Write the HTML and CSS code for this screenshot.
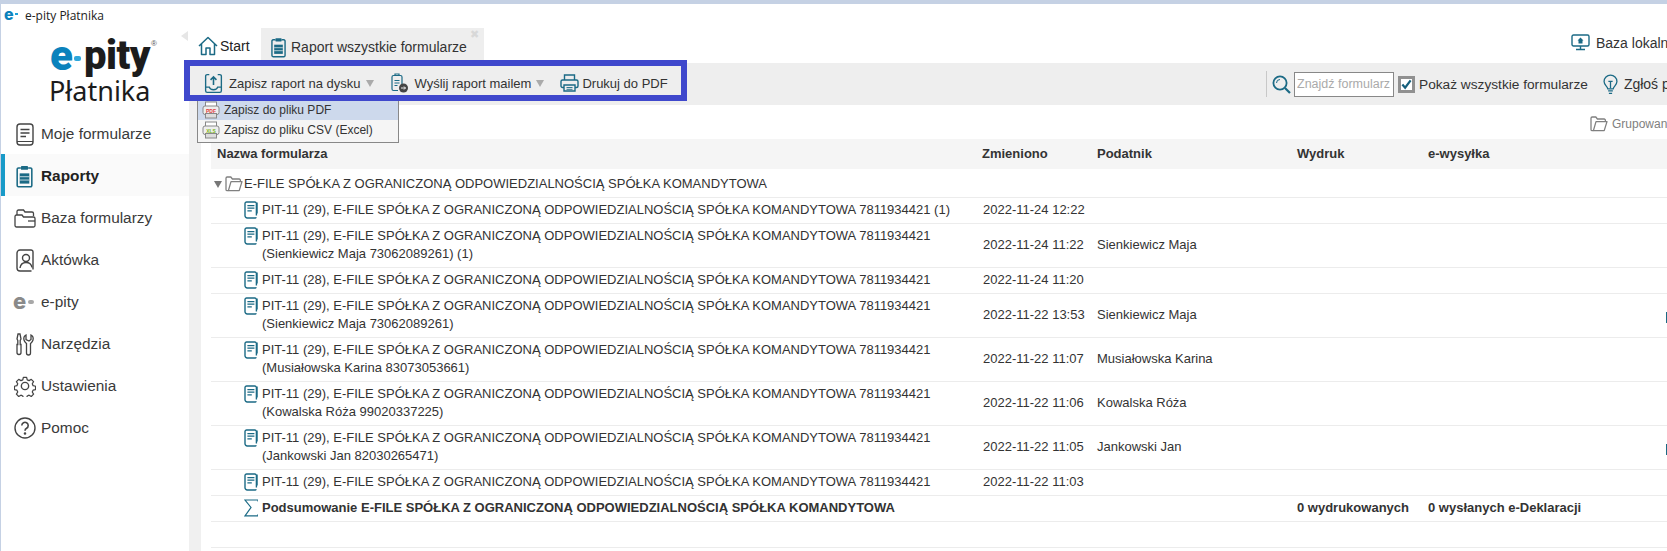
FILE: index.html
```html
<!DOCTYPE html>
<html lang="pl">
<head>
<meta charset="utf-8">
<title>e-pity Płatnika</title>
<link rel="stylesheet" href="styles.css">
</head>
<body>
<svg class="defs" width="0" height="0" aria-hidden="true">
  <symbol id="i-doc" viewBox="0 0 14 18">
    <path d="M12.4 14.6V2.6a1.6 1.6 0 0 0-1.6-1.6H2.6A1.6 1.6 0 0 0 1 2.6v12.2A2.2 2.2 0 0 0 3.2 17h8.2a1.4 1.4 0 0 0 1-.6" fill="none" stroke="currentColor" stroke-width="1.4"/>
    <path d="M3.4 4.6h7M3.4 7.2h7M3.4 9.8h4.4" fill="none" stroke="currentColor" stroke-width="1.2"/>
    <path d="M13.6 1.5v11" stroke="currentColor" stroke-width=".8"/>
  </symbol>
  <symbol id="i-clip" viewBox="0 0 16 22">
    <path d="M4.5 2.8H2.2A1.2 1.2 0 0 0 1 4v15.600a1.2 1.2 0 0 0 1.2 1.2h11.600a1.2 1.2 0 0 0 1.2-1.2V4a1.2 1.2 0 0 0-1.2-1.2h-2.300" fill="none" stroke="currentColor" stroke-width="1.5"/>
    <rect x="4.6" y="1" width="6.8" height="3.6" rx=".8" fill="currentColor"/>
    <rect x="3.4" y="8" width="9.2" height="9.8" fill="currentColor"/>
    <path d="M3.4 11.2h9.2M3.4 14.4h9.2" stroke="#fff" stroke-width=".7"/>
  </symbol>
  <symbol id="i-folder" viewBox="0 0 18 16">
    <path d="M3.400 14.600H2.200A1.200 1.200 0 0 1 1 13.400V2.200A1.200 1.200 0 0 1 2.200 1h3.600l1.600 2h6.800a1.200 1.200 0 0 1 1.200 1.200V5.600" fill="none" stroke="currentColor" stroke-width="1.300"/>
    <path d="M3.400 14.600 6 5.600h11l-2.800 9z" fill="none" stroke="currentColor" stroke-width="1.300" stroke-linejoin="round"/>
  </symbol>
</svg>

<div class="top-band"></div>
<header class="titlebar">
  <span class="title-logo">e<i class="title-dash"></i></span>
  <span class="title-text">e-pity Płatnika</span>
</header>

<div class="app">
  <aside class="sidebar">
    <svg class="collapse" width="7" height="10" viewBox="0 0 7 10"><path d="M7 0v10L0 5z" fill="#e6e6e6"/></svg>
    <div class="logo">
      <div class="logo-mark"><span class="logo-e">e</span><i class="logo-dash"></i><span class="logo-pity">pity</span><sup class="logo-reg">®</sup></div>
      <div class="logo-name">Płatnika</div>
    </div>
    <nav class="nav">
      <a class="nav-item">
        <span class="nav-icon"><svg width="18" height="23" viewBox="0 0 18 23" fill="none" stroke="#444" stroke-width="1.4"><rect x="1" y="1" width="16" height="21" rx="3"/><path d="M4.500 6.500h9M4.500 10h9M4.500 13.500h5.500"/><path d="M1 18.500h16" stroke-width="1"/></svg></span>
        Moje formularze
      </a>
      <a class="nav-item active">
        <span class="nav-icon teal"><svg width="17" height="23"><use href="#i-clip"/></svg></span>
        Raporty
      </a>
      <a class="nav-item">
        <span class="nav-icon"><svg width="22" height="22" viewBox="0 0 22 22" fill="none" stroke="#444" stroke-width="1.3"><path d="M3 8V4.500a1.500 1.500 0 0 1 1.500-1.500h5l1.500 2h7a1.500 1.500 0 0 1 1.500 1.500V9"/><path d="M1 9.500a1.500 1.500 0 0 1 1.500-1.500H8l1.500 2h10a1.500 1.500 0 0 1 1.500 1.500v7a1.500 1.500 0 0 1-1.500 1.500h-17A1.500 1.500 0 0 1 1 18.500z"/><path d="M14 14h7"/></svg></span>
        Baza formularzy
      </a>
      <a class="nav-item">
        <span class="nav-icon"><svg width="18" height="23" viewBox="0 0 18 23" fill="none" stroke="#444" stroke-width="1.4"><path d="M17 20.500V3a2 2 0 0 0-2-2H4a3 3 0 0 0-3 3v15a3 3 0 0 0 3 3h11.500"/><circle cx="10" cy="9" r="3.500"/><path d="M4 19c.5-3.500 3-5.500 6-5.500s5.500 2 6 5"/></svg></span>
        Aktówka
      </a>
      <a class="nav-item">
        <span class="nav-icon nav-e">e<i class="nav-e-dot"></i></span>
        e-pity
      </a>
      <a class="nav-item">
        <span class="nav-icon"><svg width="22" height="23" viewBox="0 0 22 23" fill="none" stroke="#444" stroke-width="1.3"><path d="M4 1 3 6l.8 1.500v4H3v8a2 2 0 0 0 4 0v-8h-.8v-4L7 6 6 1z"/><path d="M12 2c-1.800 1-2.500 3-2 5s2 3 2.500 3.500V20a2 2 0 0 0 4 0V10.500c.5-.5 2-1.500 2.500-3.500s-.2-4-2-5v4.500l-2 1.500-3-1.500z"/></svg></span>
        Narzędzia
      </a>
      <a class="nav-item">
        <span class="nav-icon"><svg width="22" height="22" viewBox="0 0 24 24" fill="none" stroke="#444" stroke-width="1.500" stroke-linejoin="round"><circle cx="12" cy="12" r="4"/><path d="M10 1.500h4l.7 3 2.300 1 2.600-1.600 2.800 2.800-1.600 2.600 1 2.300 3 .7v4l-3 .7-1 2.300 1.600 2.600-2.800 2.800-2.600-1.600-2.300 1-.7 2.700h-4l-.7-2.700-2.300-1-2.600 1.600-2.800-2.800 1.600-2.600-1-2.300-3-.7v-4l3-.7 1-2.300-1.600-2.600 2.800-2.800 2.600 1.600 2.300-1z" transform="translate(1.200 1.200) scale(.9)"/></svg></span>
        Ustawienia
      </a>
      <a class="nav-item">
        <span class="nav-icon"><svg width="22" height="22" viewBox="0 0 22 22" fill="none" stroke="#444" stroke-width="1.400"><circle cx="11" cy="11" r="10"/><path d="M7.800 8.500a3.200 3.200 0 1 1 4.800 2.800c-1 .6-1.600 1.200-1.600 2.400" stroke-width="1.600"/><circle cx="11" cy="16.500" r=".6" fill="#444"/></svg></span>
        Pomoc
      </a>
    </nav>
  </aside>

  <main class="content">
    <div class="tabs">
      <div class="tab tab-start">
        <svg class="teal" width="20" height="20" viewBox="0 0 20 20" fill="none" stroke="currentColor" stroke-width="1.500" stroke-linejoin="round"><path d="M1 10 10 1.500 19 10M3.500 8v10.500H8V12h4v6.500h4.500V8"/></svg>
        Start
      </div>
      <div class="tab tab-report">
        <svg class="teal" width="15" height="21"><use href="#i-clip"/></svg>
        Raport wszystkie formularze
        <span class="tab-close">✖</span>
      </div>
      <div class="tab-right">
        <svg class="teal" width="19" height="17" viewBox="0 0 19 17" fill="none" stroke="currentColor" stroke-width="1.400"><rect x="1" y="1" width="17" height="11" rx="1.500"/><path d="M9.500 12v3M5 15.500h9" /><path d="M9.500 3.500 6.500 6.500h1v3h4v-3h1z" fill="currentColor" stroke="none"/></svg>
        Baza lokalna
      </div>
    </div>

    <div class="toolbar">
      <div class="tool-left">
        <button class="tool">
          <svg class="teal" width="19" height="21" viewBox="0 0 18 20" fill="none" stroke="currentColor" stroke-width="1.300"><path d="M5 1.500H3a1.500 1.500 0 0 0-1.500 1.500v14A1.500 1.500 0 0 0 3 18.500h12a1.500 1.500 0 0 0 1.500-1.500V3A1.500 1.500 0 0 0 15 1.500h-2"/><path d="M1.500 13.500H5c.5 2 2 2.500 4 2.500s3.500-.5 4-2.500h3.500"/><path d="M9 11.500V4M6.200 6.500 9 3.700l2.800 2.800" stroke-width="1.500"/></svg>
          Zapisz raport na dysku
          <i class="caret"></i>
        </button>
        <button class="tool tool-mail">
          <svg class="teal" width="18" height="20" viewBox="0 0 18 20" fill="none" stroke="currentColor" stroke-width="1.200"><path d="M11 14V4a1.500 1.500 0 0 0-1.500-1.500H2.500A1.500 1.500 0 0 0 1 4v12a1.500 1.500 0 0 0 1.500 1.500H7"/><path d="M3.500 7.500h5M3.500 10h5M3.500 12.500h3"/><path d="M4 2.500V1h4v1.500" /><circle cx="12.500" cy="15" r="4.500" fill="#444" stroke="none"/><path d="M10 15h4.500M13 13.500l1.500 1.500-1.500 1.500" stroke="#fff" stroke-width=".9"/></svg>
          Wyślij raport mailem
          <i class="caret"></i>
        </button>
        <button class="tool tool-print">
          <svg class="teal" width="19" height="18" viewBox="0 0 19 18" fill="none" stroke="currentColor" stroke-width="1.400"><path d="M4.500 6V1h10v5"/><rect x="1" y="6" width="17" height="7.500" rx="1.500"/><path d="M4 11h11v6H4z" fill="#eee"/><path d="M6.500 13.500h6M6.500 15.300h6" stroke-width=".9"/></svg>
          Drukuj do PDF
        </button>
      </div>
      <div class="tool-right">
        <i class="tool-sep"></i>
        <svg class="teal search-icon" width="19" height="19" viewBox="0 0 19 19" fill="none" stroke="currentColor"><circle cx="8" cy="8" r="6.600" stroke-width="1.800"/><path d="m13 13 5 5" stroke-width="2.200"/><path d="M4.500 8A3.500 3.500 0 0 1 8 4.500" stroke-width="1"/></svg>
        <input class="search" type="text" placeholder="Znajdź formularz">
        <span class="check"><svg width="12" height="11" viewBox="0 0 12 11" fill="none" stroke="#155f7c" stroke-width="2.400"><path d="m1.500 5.500 3 3.500 6-8"/></svg></span>
        <span class="check-label">Pokaż wszystkie formularze</span>
        <svg class="teal bulb" width="15" height="21" viewBox="0 0 14 19" fill="none" stroke="currentColor" stroke-width="1.200"><path d="M4.500 13.500C4 11 1 10 1 6.800a6 6 0 0 1 12 0c0 3.200-3 4.200-3.500 6.700z"/><path d="M7 13V7M5 6.500h4M4.800 15.500h4.400M5.500 17.700h3"/></svg>
        <span class="report">Zgłoś problem</span>
      </div>
    </div>

    <div class="lower">
      <div class="strip"></div>
      <div class="report-area">
        <div class="grouping">
          <svg class="gray" width="18" height="16"><use href="#i-folder"/></svg>
          <span>Grupowanie</span>
        </div>

        <div class="row head">
          <div class="c-name">Nazwa formularza</div>
          <div>Zmieniono</div>
          <div>Podatnik</div>
          <div>Wydruk</div>
          <div>e-wysyłka</div>
        </div>

        <div class="row group">
          <div class="c-name">
            <i class="tri"></i>
            <svg class="gray" width="18" height="16"><use href="#i-folder"/></svg>
            <span>E-FILE SPÓŁKA Z OGRANICZONĄ ODPOWIEDZIALNOŚCIĄ SPÓŁKA KOMANDYTOWA</span>
          </div>
        </div>

        <div class="row">
          <div class="c-form"><svg class="teal" width="14" height="18"><use href="#i-doc"/></svg><span>PIT-11 (29), E-FILE SPÓŁKA Z OGRANICZONĄ ODPOWIEDZIALNOŚCIĄ SPÓŁKA KOMANDYTOWA 7811934421 (1)</span></div>
          <div class="c-date">2022-11-24 12:22</div><div></div><div></div><div></div><div></div>
        </div>
        <div class="row tall">
          <div class="c-form"><svg class="teal" width="14" height="18"><use href="#i-doc"/></svg><span>PIT-11 (29), E-FILE SPÓŁKA Z OGRANICZONĄ ODPOWIEDZIALNOŚCIĄ SPÓŁKA KOMANDYTOWA 7811934421<br>(Sienkiewicz Maja 73062089261) (1)</span></div>
          <div class="c-date">2022-11-24 11:22</div><div>Sienkiewicz Maja</div><div></div><div></div><div></div>
        </div>
        <div class="row">
          <div class="c-form"><svg class="teal" width="14" height="18"><use href="#i-doc"/></svg><span>PIT-11 (28), E-FILE SPÓŁKA Z OGRANICZONĄ ODPOWIEDZIALNOŚCIĄ SPÓŁKA KOMANDYTOWA 7811934421</span></div>
          <div class="c-date">2022-11-24 11:20</div><div></div><div></div><div></div><div></div>
        </div>
        <div class="row tall">
          <div class="c-form"><svg class="teal" width="14" height="18"><use href="#i-doc"/></svg><span>PIT-11 (29), E-FILE SPÓŁKA Z OGRANICZONĄ ODPOWIEDZIALNOŚCIĄ SPÓŁKA KOMANDYTOWA 7811934421<br>(Sienkiewicz Maja 73062089261)</span></div>
          <div class="c-date">2022-11-22 13:53</div><div>Sienkiewicz Maja</div><div></div><div></div><div><i class="edge-icon"></i></div>
        </div>
        <div class="row tall">
          <div class="c-form"><svg class="teal" width="14" height="18"><use href="#i-doc"/></svg><span>PIT-11 (29), E-FILE SPÓŁKA Z OGRANICZONĄ ODPOWIEDZIALNOŚCIĄ SPÓŁKA KOMANDYTOWA 7811934421<br>(Musiałowska Karina 83073053661)</span></div>
          <div class="c-date">2022-11-22 11:07</div><div>Musiałowska Karina</div><div></div><div></div><div></div>
        </div>
        <div class="row tall">
          <div class="c-form"><svg class="teal" width="14" height="18"><use href="#i-doc"/></svg><span>PIT-11 (29), E-FILE SPÓŁKA Z OGRANICZONĄ ODPOWIEDZIALNOŚCIĄ SPÓŁKA KOMANDYTOWA 7811934421<br>(Kowalska Róża 99020337225)</span></div>
          <div class="c-date">2022-11-22 11:06</div><div>Kowalska Róża</div><div></div><div></div><div></div>
        </div>
        <div class="row tall">
          <div class="c-form"><svg class="teal" width="14" height="18"><use href="#i-doc"/></svg><span>PIT-11 (29), E-FILE SPÓŁKA Z OGRANICZONĄ ODPOWIEDZIALNOŚCIĄ SPÓŁKA KOMANDYTOWA 7811934421<br>(Jankowski Jan 82030265471)</span></div>
          <div class="c-date">2022-11-22 11:05</div><div>Jankowski Jan</div><div></div><div></div><div><i class="edge-icon"></i></div>
        </div>
        <div class="row">
          <div class="c-form"><svg class="teal" width="14" height="18"><use href="#i-doc"/></svg><span>PIT-11 (29), E-FILE SPÓŁKA Z OGRANICZONĄ ODPOWIEDZIALNOŚCIĄ SPÓŁKA KOMANDYTOWA 7811934421</span></div>
          <div class="c-date">2022-11-22 11:03</div><div></div><div></div><div></div><div></div>
        </div>
        <div class="row total">
          <div class="c-form"><svg class="teal" width="14" height="18" viewBox="0 0 14 18" fill="none" stroke="currentColor" stroke-width="1.200"><path d="M14 2.500V1H1l6 7.500L1 16.800h13v-1.500"/></svg><span>Podsumowanie E-FILE SPÓŁKA Z OGRANICZONĄ ODPOWIEDZIALNOŚCIĄ SPÓŁKA KOMANDYTOWA</span></div>
          <div></div><div></div>
          <div>0 wydrukowanych</div>
          <div>0 wysłanych e-Deklaracji</div>
        </div>
        <div class="row"></div>
        <div class="row"></div>
      </div>
    </div>
  </main>
</div>

<div class="highlight"></div>
<div class="menu">
  <div class="menu-item selected">
    <svg width="18" height="18" viewBox="0 0 18 18"><rect x="3.500" y="1" width="11" height="6" fill="#fff" stroke="#888"/><rect x="1" y="5" width="16" height="8.500" rx="2" fill="#eee" stroke="#888"/><rect x="3.500" y="12.500" width="11" height="4.500" fill="#ddd" stroke="#888"/><text x="9" y="11.500" class="menu-badge pdf">PDF</text></svg>
    Zapisz do pliku PDF
  </div>
  <div class="menu-item">
    <svg width="18" height="18" viewBox="0 0 18 18"><rect x="3.500" y="1" width="11" height="6" fill="#fff" stroke="#888"/><rect x="1" y="5" width="16" height="8.500" rx="2" fill="#eee" stroke="#888"/><rect x="3.500" y="12.500" width="11" height="4.500" fill="#ddd" stroke="#888"/><text x="9" y="11.500" class="menu-badge xls">XLS</text></svg>
    Zapisz do pliku CSV (Excel)
  </div>
</div>
</body>
</html>
```

FILE: styles.css
```css
* { box-sizing: border-box; }
html, body { margin: 0; height: 551px; overflow: hidden; }
body {
  width: 1667px;
  position: relative;
  background: #fff;
  color: #333;
  font-family: "Liberation Sans", Arial, sans-serif;
  font-size: 13px;
}
.defs { position: absolute; }
.teal { color: #1b6a85; }
.gray { color: #808080; }

.top-band { height: 4px; background: #c5d1e4; }
.titlebar {
  height: 23px;
  display: flex;
  align-items: center;
  padding-left: 3px;
  border-left: 1px solid #c5d1e4;
  font-family: "Open Sans", sans-serif;
  font-size: 12px;
  color: #222;
}
.title-logo {
  display: flex;
  align-items: center;
  width: 21px;
  font: 800 16px/16px Inter, sans-serif;
  color: #0b82bc;
  margin-top: -4px;
}
.title-dash { width: 3px; height: 2px; margin-left: 1px; background: #1da0d8; }
.title-text { margin-top: -1px; }

.app { display: flex; height: 524px; border-left: 1px solid #c5d1e4; }

.sidebar { width: 188px; flex: none; position: relative; }
.collapse { position: absolute; top: 4px; right: 1px; }
.logo { height: 85px; padding: 9px 0 0 49px; }
.logo-mark { display: flex; align-items: flex-start; height: 40px; }
.logo-e { font: 900 42px/40px Roboto, sans-serif; color: #0b82bc; }
.logo-dash { width: 7px; height: 5px; margin: 20px 3px 0 1px; border-radius: 2px; background: #2ea7db; }
.logo-pity { font: 900 40px/40px Roboto, sans-serif; color: #1c1c1c; letter-spacing: -.5px; }
.logo-reg { font: 8px/8px "Liberation Sans", sans-serif; margin: 4px 0 0 1px; color: #555; }
.logo-name { font: 400 27px/32px "Noto Sans", sans-serif; color: #1c1c1c; margin: -1px 0 0 -1px; }

.nav { display: flex; flex-direction: column; }
.nav-item {
  height: 42px;
  display: flex;
  align-items: center;
  padding: 2px 0 0 40px;
  position: relative;
  font-size: 15.4px;
  color: #3a3a3a;
}
.nav-icon {
  position: absolute;
  left: 12px;
  width: 23px;
  display: flex;
  justify-content: center;
}
.nav-item.active {
  font-weight: 700;
  color: #222;
  background: #fafafa;
  box-shadow: inset 4px 0 0 #189ac8;
}
.nav-e {
  justify-content: flex-start;
  align-items: center;
  font: 800 22px/22px Inter, sans-serif;
  color: #8a8a8a;
  margin-top: -3px;
}
.nav-e-dot { width: 6px; height: 4px; margin: 3px 0 0 2px; border-radius: 2px; background: #a8a8a8; }

.content { flex: 1; min-width: 0; display: flex; flex-direction: column; }
.tabs { height: 36px; display: flex; align-items: flex-start; position: relative; padding-left: 1px; }
.tab { display: flex; align-items: center; font-size: 14px; }
.tab-start { width: 71px; height: 36px; padding: 2px 0 0 8px; gap: 2px; color: #222; }
.tab-report {
  width: 223px;
  height: 33px;
  margin-top: 1px;
  padding: 5px 0 0 10px;
  gap: 5px;
  background: #eee;
  position: relative;
}
.tab-close { position: absolute; right: 5px; top: 0; font-size: 11px; color: #d8d8d8; }
.tab-right {
  display: flex;
  align-items: center;
  gap: 6px;
  position: absolute;
  left: 1382px;
  top: 7px;
  font-size: 14px;
  white-space: nowrap;
}

.toolbar { height: 42px; background: #eee; display: flex; align-items: center; flex: none; }
.tool-left { display: flex; align-items: center; width: 1077px; flex: none; padding: 0 0 2px 15px; }
.tool {
  display: flex;
  align-items: center;
  gap: 6px;
  border: 0;
  padding: 0;
  background: none;
  color: #333;
  font: 13px "Liberation Sans", sans-serif;
  white-space: nowrap;
}
.tool-mail { margin-left: 17px; }
.tool-print { margin-left: 16px; gap: 3px; }
.caret {
  width: 0;
  height: 0;
  margin-left: -1px;
  border-left: 4px solid transparent;
  border-right: 4px solid transparent;
  border-top: 7px solid #aaa;
}
.tool-right { display: flex; align-items: center; flex: none; white-space: nowrap; }
.tool-sep { width: 1px; height: 26px; background: #c8c8c8; margin-right: 5px; }
.search-icon { margin-right: 3px; }
.search {
  width: 100px;
  height: 25px;
  padding: 0 2px;
  border: 1px solid #888;
  background: #fff;
  font: 12.5px "Liberation Sans", sans-serif;
}
.search::placeholder { color: #aaa; opacity: 1; }
.check {
  width: 17px;
  height: 17px;
  margin: 0 4px 0 4px;
  display: flex;
  align-items: center;
  justify-content: center;
  border: 3px solid #909090;
  background: #fff;
}
.check-label { font-size: 13.7px; }
.bulb { margin: 0 6px 0 15px; }
.report { font-size: 14px; }

.lower { flex: 1; display: flex; min-height: 0; }
.strip { width: 12px; flex: none; background: #f0f0f0; }
.report-area { flex: 1; min-width: 0; padding-left: 10px; }
.grouping {
  height: 34px;
  display: flex;
  align-items: center;
  gap: 4px;
  padding: 4px 0 0 1379px;
  font-size: 12px;
  color: #808080;
  white-space: nowrap;
}
.grouping svg, .group svg { flex: none; }

.row {
  display: grid;
  grid-template-columns: 771px 115px 200px 131px 238px 20px;
  align-items: center;
  height: 26px;
  padding-bottom: 1px;
  border-bottom: 1px solid #ececec;
  line-height: 18px;
  white-space: nowrap;
}
.row.tall { height: 44px; }
.row.head {
  height: 30px;
  padding-bottom: 0;
  border-bottom: 0;
  background: #f5f5f5;
  font-weight: 700;
}
.row.group { height: 29px; padding: 2px 0 0; }
.c-name { display: flex; align-items: center; padding-left: 6px; }
.group .c-name { padding-left: 3px; gap: 1px; }
.tri {
  width: 0;
  height: 0;
  margin-right: 2px;
  border-left: 4.500px solid transparent;
  border-right: 4.500px solid transparent;
  border-top: 7px solid #777;
}
.c-form { display: flex; align-items: flex-start; gap: 4px; padding-left: 33px; }
.c-form svg { flex: none; }
.c-date { padding-left: 1px; }
.total { font-weight: 700; }
.edge-icon { display: block; width: 8px; height: 11px; margin-top: 5px; background: #1b6a85; }

.highlight {
  position: absolute;
  left: 184px;
  top: 60px;
  width: 503px;
  height: 41px;
  border: 6px solid #3f48cc;
}
.menu {
  position: absolute;
  left: 197px;
  top: 101px;
  width: 202px;
  height: 42px;
  border: 1px solid #888;
  border-top: 0;
  background: #f5f5f5;
}
.menu-item {
  height: 21px;
  display: flex;
  align-items: center;
  gap: 4px;
  padding: 0 0 2px 4px;
  font-size: 12px;
  line-height: 18px;
  color: #333;
  white-space: nowrap;
}
.menu-item.selected { height: 19px; background: #cdd9ec; }
.menu-badge { font: 700 5px "Liberation Sans", sans-serif; text-anchor: middle; }
.pdf { fill: #e03c3c; }
.xls { fill: #7cb518; }
```
